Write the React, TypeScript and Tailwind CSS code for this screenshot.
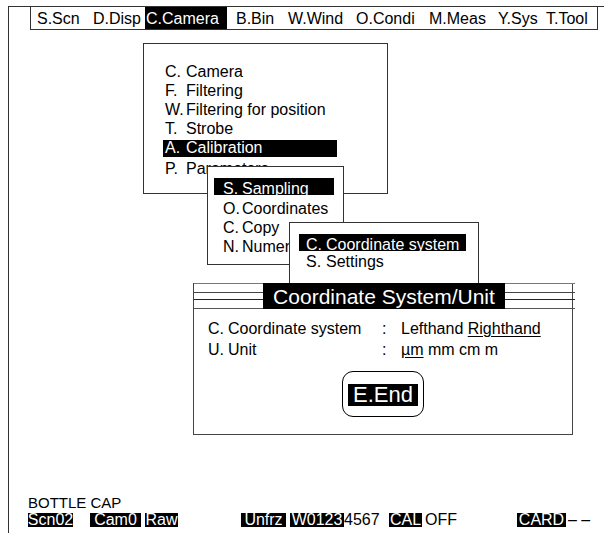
import React from "react";

const menu = [
  { label: "S.Scn", w: "w-[62px] pl-[6px]" },
  { label: "D.Disp", w: "w-[52px]" },
  { label: "C.Camera", w: "w-[82px] pl-[1px] bg-black text-white" },
  { label: "B.Bin", w: "w-[61px] pl-[9px]" },
  { label: "W.Wind", w: "w-[68px]" },
  { label: "O.Condi", w: "w-[73px]" },
  { label: "M.Meas", w: "w-[69px]" },
  { label: "Y.Sys", w: "w-[48px]" },
  { label: "T.Tool", w: "flex-1" },
];

const cameraItems = [
  ["C.", "Camera"],
  ["F.", "Filtering"],
  ["W.", "Filtering for position"],
  ["T.", "Strobe"],
  ["A.", "Calibration"],
  ["P.", "Parameters"],
];

const Lines = ({ className }: { className: string }) => (
  <div className={`flex flex-col ${className}`}>
    <div className="h-px bg-[#777]" />
    <div className="h-[8px]" />
    <div className="h-px bg-[#444]" />
    <div className="h-[6px]" />
    <div className="h-px bg-[#222]" />
    <div className="h-[8px]" />
    <div className="h-px bg-[#555]" />
  </div>
);

const Tag = ({ w, ml, children }: { w: string; ml: string; children: React.ReactNode }) => (
  <span className={`${w} ${ml} h-[14px] bg-black text-white flex justify-center whitespace-nowrap`}>
    {children}
  </span>
);

export default function App() {
  return (
    <div className="relative w-[604px] h-[533px] overflow-hidden bg-white pl-[8px] pt-[6px] text-black font-['Liberation_Sans',Arial,sans-serif]">
      {/* screen frame */}
      <div className="h-full border-l border-t border-[#333] flex flex-col">
        <div className="ml-[21px] w-[568px] h-[23px] border-x border-b border-[#333] flex text-[16px] leading-[24px]">
          {menu.map((m) => (
            <div key={m.label} className={`h-full whitespace-nowrap ${m.w}`}>
              {m.label}
            </div>
          ))}
        </div>

        <div className="mt-auto pl-[19px] pb-[6px]">
          <div className="h-[15px] leading-[15px] text-[15px]">BOTTLE CAP</div>
          <div className="mt-[3px] h-[14px] flex leading-[14px] text-[16px]">
            <Tag w="w-[45px]" ml="">Scn02</Tag>
            <Tag w="w-[51px]" ml="ml-[17px]">Cam0</Tag>
            <Tag w="w-[33px]" ml="ml-[4px]">Raw</Tag>
            <Tag w="w-[45px]" ml="ml-[63px]">Unfrz</Tag>
            <Tag w="w-[54px]" ml="ml-[4px]">W0123</Tag>
            <span className="w-[45px]">4567</span>
            <Tag w="w-[33px]" ml="">CAL</Tag>
            <span className="w-[92px] ml-[3px]">OFF</span>
            <Tag w="w-[49px]" ml="">CARD</Tag>
            <span className="ml-[2px] whitespace-nowrap">– –</span>
          </div>
        </div>
      </div>

      {/* C.Camera pull-down */}
      <div className="absolute left-[143px] top-[43px] w-[245px] h-[151px] border border-[#333] bg-white pt-[18px] text-[16px]">
        {cameraItems.map(([k, t]) =>
          k === "A." ? (
            <div key={k} className="h-[19px] ml-[19px] w-[174px]">
              <div className="mt-[2px] h-[17px] leading-[16px] bg-black text-white flex pl-[2px]">
                <span className="w-[21px]">{k}</span>
                <span>{t}</span>
              </div>
            </div>
          ) : (
            <div key={k} className="h-[19px] leading-[19px] ml-[19px] w-[174px] flex pl-[2px] whitespace-nowrap">
              <span className="w-[21px] shrink-0">{k}</span>
              <span>{t}</span>
            </div>
          )
        )}
      </div>

      {/* A.Calibration sub menu */}
      <div className="absolute left-[207px] top-[166px] w-[137px] h-[99px] border border-[#333] bg-white pt-[11px] text-[16px]">
        <div className="ml-[6px] w-[120px] h-[17px] leading-[21px] bg-black text-white flex pl-[9px]">
          <span className="w-[19px]">S.</span>
          <span>Sampling</span>
        </div>
        <div className="mt-[4px]">
          {[
            ["O.", "Coordinates"],
            ["C.", "Copy"],
            ["N.", "Numerical calibration"],
          ].map(([k, t]) => (
            <div key={k} className="h-[19px] leading-[19px] ml-[6px] flex pl-[9px] whitespace-nowrap">
              <span className="w-[19px] shrink-0">{k}</span>
              <span>{t}</span>
            </div>
          ))}
        </div>
      </div>

      {/* Coordinates sub menu */}
      <div className="absolute left-[289px] top-[222px] w-[190px] h-[80px] border border-[#333] bg-white pt-[11px] text-[16px]">
        <div className="ml-[9px] w-[167px] h-[17px] leading-[21px] bg-black text-white flex pl-[7px] whitespace-nowrap">
          <span className="w-[20px] shrink-0">C.</span>
          <span>Coordinate system</span>
        </div>
        <div className="mt-[1px] h-[19px] leading-[19px] ml-[9px] flex pl-[7px]">
          <span className="w-[20px] shrink-0">S.</span>
          <span>Settings</span>
        </div>
      </div>

      {/* Coordinate System/Unit dialog */}
      <div className="absolute left-[193px] top-[283px] w-[380px] h-[152px] border-x border-b border-[#444] bg-white">
        <div className="flex h-[26px] -mr-[3px]">
          <Lines className="w-[69px]" />
          <div className="w-[242px] h-[26px] bg-black text-white text-[21px] leading-[27px] text-center whitespace-nowrap">
            Coordinate System/Unit
          </div>
          <Lines className="flex-1" />
        </div>
        <div className="pt-[9px] pl-[14px] text-[16px] leading-[21px]">
          <div className="flex whitespace-nowrap">
            <span className="w-[20px]">C.</span>
            <span className="w-[154px]">Coordinate system</span>
            <span className="w-[19px]">:</span>
            <span>
              Lefthand <span className="underline underline-offset-[2px]">Righthand</span>
            </span>
          </div>
          <div className="flex whitespace-nowrap">
            <span className="w-[20px]">U.</span>
            <span className="w-[154px]">Unit</span>
            <span className="w-[19px]">:</span>
            <span>
              <span className="underline underline-offset-[2px]">µm</span> mm cm m
            </span>
          </div>
        </div>
        <div className="mt-[11px] mx-auto w-[82px] h-[46px] rounded-[11px] border border-black flex items-center justify-center">
          <div className="mt-[2px] w-[70px] h-[22px] bg-black text-white text-[22px] leading-[22px] text-center">
            E.End
          </div>
        </div>
      </div>
    </div>
  );
}
